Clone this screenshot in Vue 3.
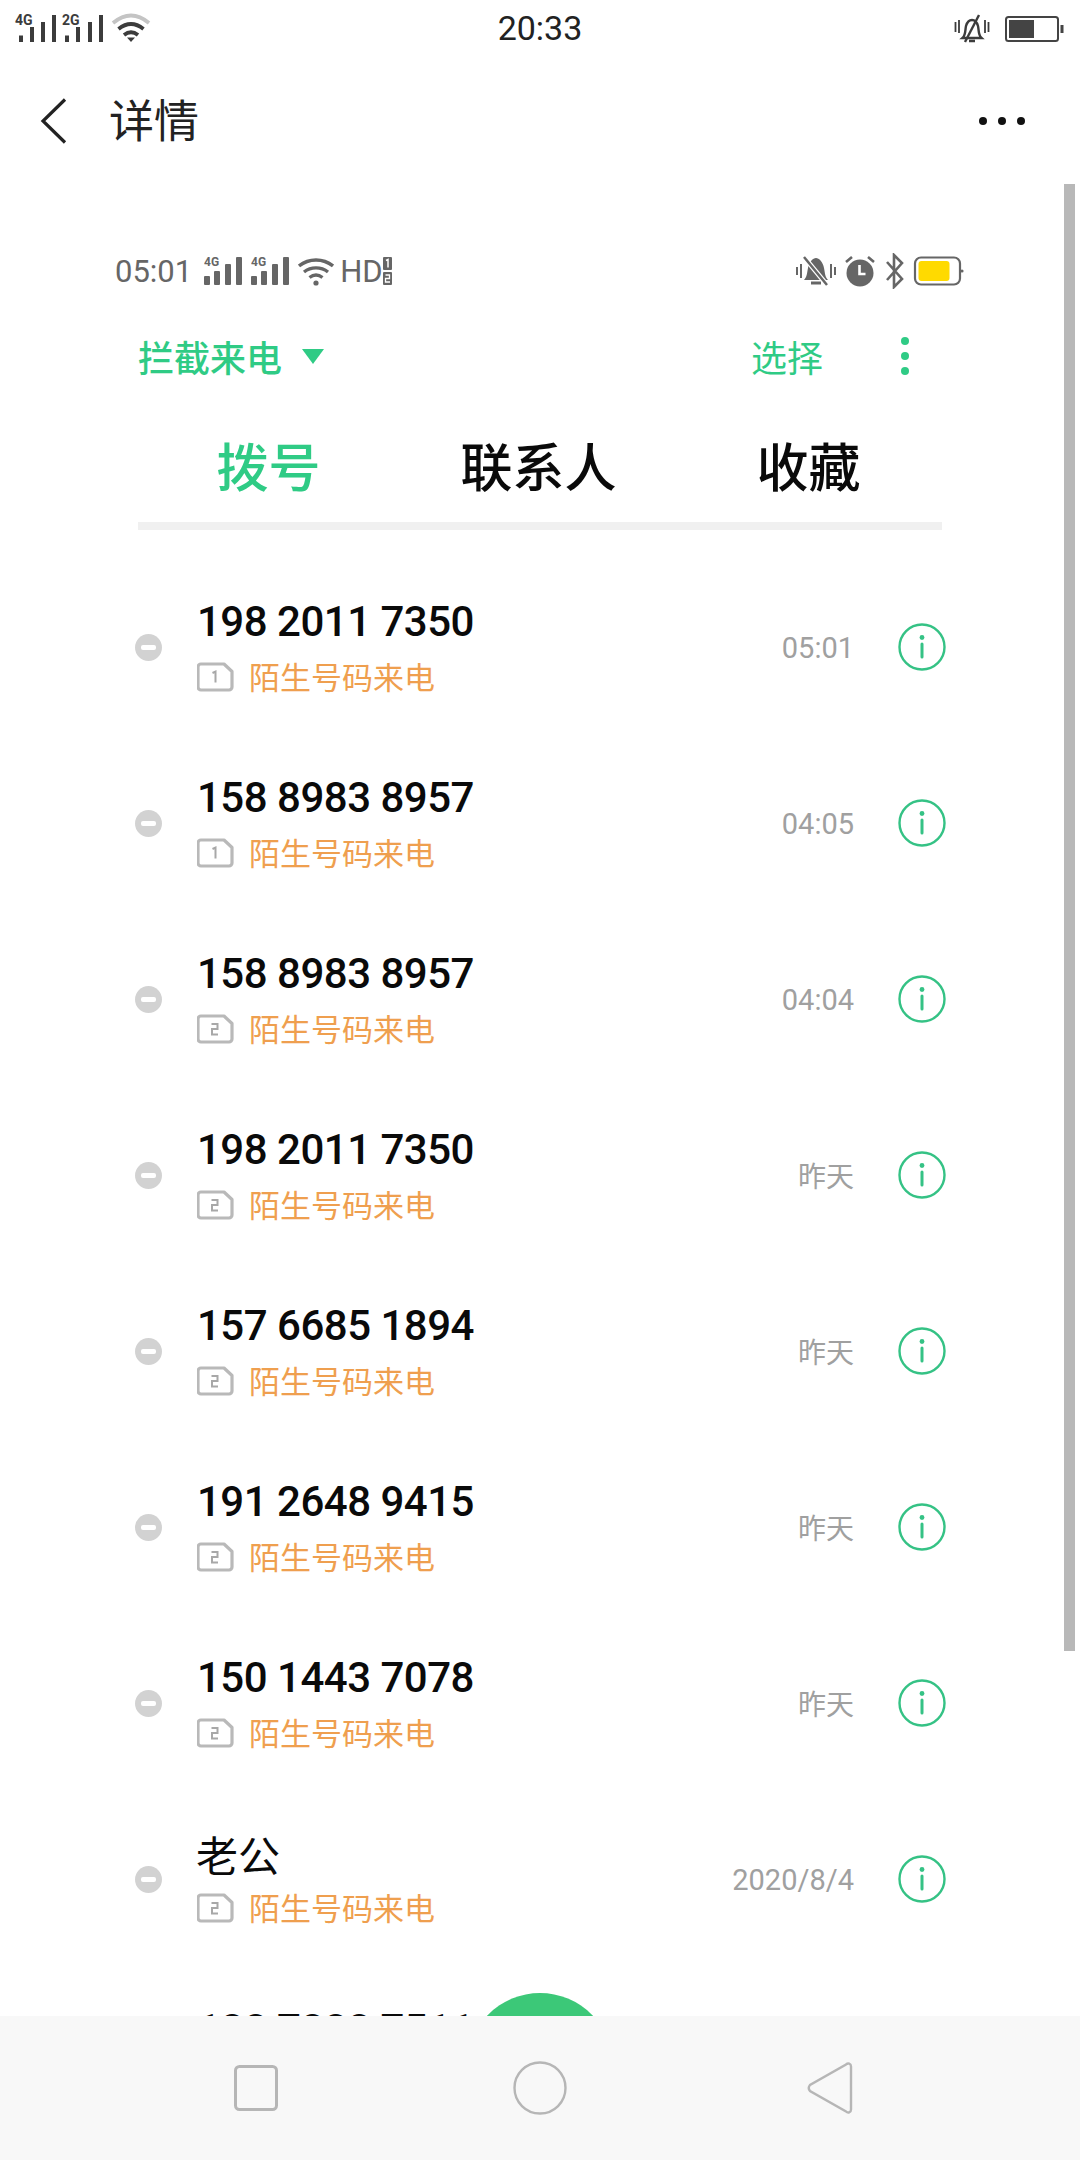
<template>
  <div class="phone">
    <div class="status">
      <div class="status-left">
        <svg width="140" height="34" viewBox="0 0 140 34" class="sig">
          <g fill="#3c3c3c">
            <rect x="4" y="24.500" width="4" height="6.500" />
            <rect x="15" y="16" width="4" height="15" />
            <rect x="26" y="11" width="4" height="20" />
            <rect x="37" y="4" width="4" height="27" />
            <rect x="50" y="24.500" width="4" height="6.500" />
            <rect x="61" y="16" width="4" height="15" />
            <rect x="73" y="11" width="4" height="20" />
            <rect x="84" y="4" width="4" height="27" />
          </g>
          <text x="0" y="14" class="sig-label">4G</text>
          <text x="47" y="14" class="sig-label">2G</text>
          <g fill="none" stroke-width="3.800">
            <path d="M98 12Q116 -3 134 12" stroke="#c4c4c4" />
            <path d="M103.500 18Q116 8 128.500 18" stroke="#3c3c3c" />
            <path d="M109 24Q116 18.500 123 24" stroke="#3c3c3c" />
          </g>
          <path d="M112 26.500h8l-4 4.500z" fill="#3c3c3c" />
        </svg>
      </div>
      <span class="clock">20:33</span>
      <div class="status-right">
        <svg width="36" height="30" viewBox="0 0 36 30" fill="none" stroke="#3c3c3c" stroke-width="2.400">
          <path d="M1.500 8v10M5 6v13M31 6v13M34.500 8v10" stroke-width="1.800" />
          <path d="M8.500 24c3.500-3 2.500-8 3.500-12 1-3.500 3.500-6 6-6s5 2.500 6 6c1 4 0 9 3.500 12zM15 27h6" />
          <path d="M25 1 11 28" />
        </svg>
        <svg width="60" height="28" viewBox="0 0 60 28">
          <rect x="1" y="2" width="52" height="24" rx="2.500" fill="none" stroke="#444" stroke-width="2" />
          <rect x="4" y="5" width="25" height="18" fill="#444" />
          <rect x="55.500" y="10" width="3" height="8" fill="#444" />
        </svg>
      </div>
    </div>

    <header class="topbar">
      <svg class="back" width="28" height="46" viewBox="0 0 28 46" fill="none" stroke="#222" stroke-width="3.200">
        <path d="M25 1.500 3 23l22 21.500" />
      </svg>
      <h1 class="title">详情</h1>
      <div class="more"><i></i><i></i><i></i></div>
    </header>

    <main class="body">
      <div class="scrollbar"></div>

      <div class="inner-status">
        <div class="inner-left">
          <span class="inner-clock">05:01</span>
          <svg width="38" height="30" viewBox="0 0 38 30" v-for="n in 2" :key="n">
            <text x="0" y="10" class="inner-sig-label">4G</text>
            <g fill="#666">
              <rect x="0" y="20" width="6" height="9" rx="1" />
              <rect x="10" y="15" width="6" height="14" rx="1" />
              <rect x="21" y="8" width="6" height="21" rx="1" />
              <rect x="32" y="1" width="6" height="28" rx="1" />
            </g>
          </svg>
          <svg width="36" height="30" viewBox="0 0 36 30" fill="none" stroke="#666" stroke-width="3.400">
            <path d="M1 10c10-8 24-8 34 0M6 16c7-5.500 17-5.500 24 0M11.500 21.500c4-3 9-3 13 0" />
            <circle cx="18" cy="27" r="2.600" fill="#666" stroke="none" />
          </svg>
          <span class="hd">HD</span>
          <svg class="hd-sims" width="10" height="28" viewBox="0 0 10 28">
            <rect x="0" y="0" width="9" height="13" rx="1" fill="#666" />
            <rect x="0" y="15" width="9" height="13" rx="1" fill="#666" />
            <path d="M3 3.500 5 2.500V10.500" stroke="#fff" stroke-width="1.500" fill="none" />
            <path d="M2.500 18h4v3.500h-4v3.500h4.500" stroke="#fff" stroke-width="1.300" fill="none" />
          </svg>
        </div>
        <div class="inner-right">
          <svg width="40" height="34" viewBox="0 0 40 34">
            <path d="M1 13v8M5 10v14M35 10v14M39 13v8" stroke="#666" stroke-width="2" />
            <path d="M8 26c3-3 3-7 4-12 1-6 5-10 8-10s7 4 8 10c1 5 1 9 4 12z" fill="#666" />
            <path d="M15 29h10" stroke="#666" stroke-width="3" />
            <path d="M8 3l23 28" stroke="#fff" stroke-width="5" />
            <path d="M8 3l23 28" stroke="#666" stroke-width="2.500" />
          </svg>
          <svg width="34" height="34" viewBox="0 0 32 34">
            <path d="M2 8l6-5M30 8l-6-5" stroke="#666" stroke-width="2.600" fill="none" />
            <circle cx="16" cy="19" r="13.500" fill="#666" />
            <path d="M15.500 11v9h6" stroke="#fff" stroke-width="2.600" fill="none" />
          </svg>
          <svg width="22" height="36" viewBox="0 0 20 36" fill="none" stroke="#666" stroke-width="2.600">
            <path d="M2 9l15 17-8 8V2l8 8L2 27" />
          </svg>
          <svg class="inner-batt" width="51" height="30" viewBox="0 0 50 30">
            <rect x="1.500" y="1.500" width="45" height="27" rx="6" fill="none" stroke="#666" stroke-width="2.200" />
            <rect x="5" y="5" width="31" height="20" rx="3" fill="#ffda00" />
            <circle cx="48.500" cy="15" r="1.600" fill="#666" />
          </svg>
        </div>
      </div>

      <div class="filter-row">
        <span class="filter">拦截来电</span>
        <span class="caret"></span>
        <span class="select">选择</span>
        <div class="kebab"><i></i><i></i><i></i></div>
      </div>

      <nav class="tabs">
        <span class="tab active">拨号</span>
        <span class="tab">联系人</span>
        <span class="tab">收藏</span>
      </nav>
      <div class="divider"></div>

      <div class="list">
        <div class="row" v-for="(r, i) in rows" :key="i">
          <span class="minus"><i></i></span>
          <div class="info">
            <div class="name" :class="{ cjk: r.cjk }">{{ r.name }}</div>
            <div class="sub">
              <svg class="sim" width="37" height="30" viewBox="0 0 37 30" fill="none">
                <path d="M4 2h23l8 7.500V25a3 3 0 0 1-3 3H4a3 3 0 0 1-3-3V5a3 3 0 0 1 3-3z" stroke="#b9b9b9" stroke-width="3.200" stroke-linejoin="round" />
                <path v-if="r.sim === 1" d="M15.500 11l3-1.500v11" stroke="#a8a8a8" stroke-width="2" />
                <path v-else d="M14.500 10h6v5h-5.500v5.500h6" stroke="#a8a8a8" stroke-width="2" />
              </svg>
              <span class="sub-text">陌生号码来电</span>
            </div>
          </div>
          <span class="when" :class="{ cjk: r.when === '昨天' }">{{ r.when }}</span>
          <svg class="info-icon" width="48" height="48" viewBox="0 0 48 48" fill="none">
            <circle cx="24" cy="24" r="22.500" stroke="#35c285" stroke-width="2.400" />
            <circle cx="24" cy="14.500" r="2.400" fill="#35c285" />
            <path d="M24 21v13" stroke="#35c285" stroke-width="3" stroke-linecap="round" />
          </svg>
        </div>
      </div>

      <div class="fab"></div>
    </main>

    <footer class="navbar">
      <svg width="44" height="46" viewBox="0 0 44 46" fill="none" stroke="#b6b6b6" stroke-width="3">
        <rect x="1.500" y="1.500" width="41" height="43" rx="4" />
      </svg>
      <svg width="54" height="54" viewBox="0 0 54 54" fill="none" stroke="#b6b6b6" stroke-width="2.400">
        <circle cx="27" cy="27" r="25.500" />
      </svg>
      <svg width="46" height="52" viewBox="0 0 46 52" fill="none" stroke="#b6b6b6" stroke-width="2.400">
        <path d="M39 2.500c2-2 5-1 5 2v43c0 3-3 4-5 2L3 29c-1.500-1.800-1.500-4.200 0-6z" />
      </svg>
    </footer>
  </div>
</template>

<script setup>
const rows = [
  { name: '198 2011 7350', sim: 1, when: '05:01' },
  { name: '158 8983 8957', sim: 1, when: '04:05' },
  { name: '158 8983 8957', sim: 2, when: '04:04' },
  { name: '198 2011 7350', sim: 2, when: '昨天' },
  { name: '157 6685 1894', sim: 2, when: '昨天' },
  { name: '191 2648 9415', sim: 2, when: '昨天' },
  { name: '150 1443 7078', sim: 2, when: '昨天' },
  { name: '老公', sim: 2, when: '2020/8/4', cjk: true },
  { name: '188 7888 7511', sim: 2, when: '2020/8/4' }
]
</script>

<style>
html, body {
  margin: 0;
  background: #fff;
}
</style>

<style scoped>
.phone {
  width: 1080px;
  height: 2160px;
  display: flex;
  flex-direction: column;
  background: #fff;
  overflow: hidden;
  font-family: Roboto, "Noto Sans CJK SC", sans-serif;
}

.status {
  height: 58px;
  flex: none;
  display: grid;
  grid-template-columns: 1fr auto 1fr;
  align-items: center;
  padding: 0 15px;
}
.status-left, .status-right {
  display: flex;
  align-items: center;
}
.status-right {
  gap: 15px;
  justify-content: flex-end;
}
.sig {
  margin-top: -2px;
  overflow: visible;
}
.sig-label {
  font: 700 14px Roboto, sans-serif;
  fill: #3c3c3c;
}
.clock {
  font-size: 34px;
  color: #222;
  margin-top: -2px;
}

.topbar {
  height: 126px;
  flex: none;
  display: flex;
  align-items: center;
  padding: 0 55px 0 40px;
  box-sizing: border-box;
}
.back {
  margin-right: 41px;
}
.title {
  margin: -6px 0 0;
  font-size: 45px;
  font-weight: 400;
  color: #222;
  font-family: "Noto Sans CJK SC", sans-serif;
}
.more {
  margin-left: auto;
  display: flex;
  gap: 11px;
}
.more i {
  width: 8px;
  height: 8px;
  border-radius: 50%;
  background: #111;
}

.body {
  flex: 1;
  min-height: 0;
  position: relative;
  overflow: hidden;
  padding: 0 138px 0 115px;
}
.scrollbar {
  position: absolute;
  left: 1064px;
  top: 0;
  width: 11px;
  height: 1467px;
  background: #b8b8b8;
}

.inner-status {
  display: flex;
  align-items: center;
  justify-content: space-between;
  height: 40px;
  margin-top: 67px;
  margin-right: -22px;
}
.inner-left, .inner-right {
  display: flex;
  align-items: center;
}
.inner-left {
  gap: 9px;
}
.inner-right {
  gap: 7px;
}
.inner-clock {
  font-size: 31px;
  color: #666;
  margin-right: 3px;
}
.inner-sig-label {
  font: 700 12px Roboto, sans-serif;
  fill: #666;
}
.hd {
  font-size: 31px;
  color: #666;
  margin-left: -3px;
}
.hd-sims {
  margin-left: -9px;
}

.filter-row {
  display: flex;
  align-items: center;
  height: 50px;
  margin-top: 40px;
  padding-left: 23px;
  color: #2fcb85;
  font-family: "Noto Sans CJK SC", sans-serif;
  font-size: 36px;
}
.filter {
  font-weight: 500;
}
.caret {
  width: 0;
  height: 0;
  margin-left: 20px;
  border-left: 11px solid transparent;
  border-right: 11px solid transparent;
  border-top: 15px solid #2fcb85;
}
.select {
  margin-left: auto;
  margin-right: 78px;
}
.kebab {
  display: flex;
  flex-direction: column;
  gap: 7px;
  margin-right: 33px;
}
.kebab i {
  width: 8px;
  height: 8px;
  border-radius: 50%;
  background: #2fcb85;
}

.tabs {
  display: grid;
  grid-template-columns: repeat(3, 270px);
  justify-content: center;
  margin: 45px -11px 0 9px;
  height: 76px;
  align-items: center;
}
.tab {
  text-align: center;
  font-family: "Noto Sans CJK SC", sans-serif;
  font-size: 52px;
  font-weight: 500;
  color: #0a0a0a;
}
.tab.active {
  color: #2fcb85;
}
.divider {
  height: 8px;
  margin: 20px 0 0 23px;
  background: #f0f0f0;
}

.list {
  margin-top: 29px;
  margin-right: -4px;
}
.row {
  height: 176px;
  display: flex;
  align-items: center;
  position: relative;
}
.minus {
  width: 27px;
  height: 27px;
  border-radius: 50%;
  background: #d2d2d2;
  margin: 0 34px 0 20px;
  display: flex;
  align-items: center;
  justify-content: center;
  flex: none;
}
.minus i {
  width: 15px;
  height: 5px;
  border-radius: 2px;
  background: #fff;
}
.info {
  flex: 1;
  min-width: 0;
}
.name {
  font-size: 42px;
  line-height: 48px;
  font-weight: 500;
  letter-spacing: -0.5px;
  color: #0a0a0a;
  margin: -1px 0 0 1px;
}
.name.cjk {
  font-family: "Noto Sans CJK SC", sans-serif;
  font-size: 42px;
  font-weight: 400;
  letter-spacing: 0;
  margin: -2px 0 0;
}
.sub {
  display: flex;
  align-items: center;
  margin-top: 9px;
  height: 40px;
}
.sim {
  flex: none;
  margin: 3px 15px 0 1px;
}
.sub-text {
  font-family: "Noto Sans CJK SC", sans-serif;
  font-size: 31px;
  color: #ef9f4f;
}
.when {
  font-size: 29px;
  color: #a0a0a0;
  margin: 2px 44px 0 0;
}
.when.cjk {
  font-family: "Noto Sans CJK SC", sans-serif;
  font-size: 28px;
  margin-top: 0;
}
.info-icon {
  flex: none;
}

.fab {
  position: absolute;
  left: 467px;
  top: 1809px;
  width: 146px;
  height: 146px;
  border-radius: 50%;
  background: #3cc878;
}

.navbar {
  height: 144px;
  flex: none;
  background: #f8f8f8;
  display: flex;
  align-items: center;
  position: relative;
}
.navbar svg {
  position: absolute;
  top: 50%;
  transform: translateY(-50%);
}
.navbar svg:nth-child(1) { left: 234px; }
.navbar svg:nth-child(2) { left: 513px; }
.navbar svg:nth-child(3) { left: 807px; }
</style>
